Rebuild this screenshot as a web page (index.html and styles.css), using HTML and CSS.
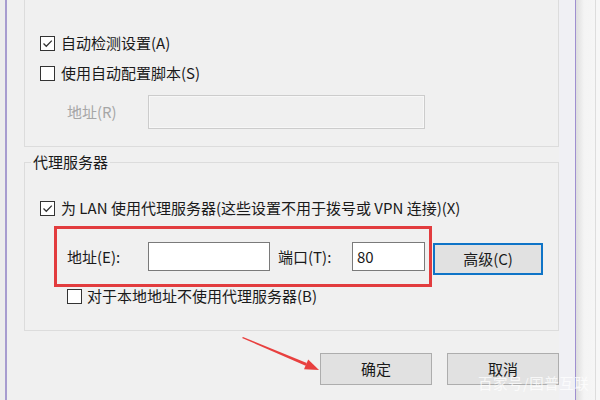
FILE: index.html
```html
<!DOCTYPE html>
<html lang="zh-CN">
  <head>
    <meta charset="UTF-8" />
    <meta name="viewport" content="width=device-width, initial-scale=1.0" />
    <title>局域网设置</title>
    <link rel="stylesheet" href="styles.css">
  </head>

  <body>
    <div class="screen">
      <div class="edge-left"></div>

      <div class="dialog">
        <!-- 自动配置 -->
        <div class="group group-top">
          <label class="check-row">
            <span class="check checked">
              <svg viewBox="0 0 13 13" width="13" height="13"><polyline points="2.5,6.5 5.3,9.3 10.8,3.6" /></svg>
            </span>
            自动检测设置(A)
          </label>
          <label class="check-row row-gap">
            <span class="check"></span>
            使用自动配置脚本(S)
          </label>
          <div class="field-row disabled">
            <span class="field-label">地址(R)</span>
            <span class="input input-wide"></span>
          </div>
        </div>

        <!-- 代理服务器 -->
        <fieldset class="group group-proxy">
          <legend>代理服务器</legend>
          <label class="check-row lan-row">
            <span class="check checked">
              <svg viewBox="0 0 13 13" width="13" height="13"><polyline points="2.5,6.5 5.3,9.3 10.8,3.6" /></svg>
            </span>
            为 LAN 使用代理服务器(这些设置不用于拨号或 VPN 连接)(X)
          </label>

          <div class="proxy-row">
            <div class="highlight">
              <span class="field-label">地址(E):</span>
              <span class="input input-addr"></span>
              <span class="port-label">端口(T):</span>
              <span class="input input-port">80</span>
            </div>
            <button class="btn btn-advanced">高级(C)</button>
          </div>

          <label class="check-row bypass-row">
            <span class="check"></span>
            对于本地地址不使用代理服务器(B)
          </label>
        </fieldset>

        <div class="actions">
          <button class="btn">确定</button>
          <button class="btn">取消</button>
        </div>
      </div>

      <div class="edge-right"></div>
    </div>

    <!-- annotation arrow + watermark -->
    <svg class="arrow" width="100" height="50" viewBox="0 0 100 50">
      <polygon points="12,11 75.8,37 74.6,39.8 11,12" fill="#e8403f" />
      <polygon points="77.2,33.6 88,44 73,43.2" fill="#e8403f" />
    </svg>
    <div class="watermark">百家号/国普互联</div>
  </body>
</html>
```

FILE: styles.css
```css
* {
  box-sizing: border-box;
}

body {
  margin: 0;
  width: 600px;
  height: 400px;
  overflow: hidden;
  position: relative;
  background: #f0f0f0;
  font-family: "Noto Sans CJK SC", "Microsoft YaHei", sans-serif;
  font-size: 15px;
  line-height: 22px;
  color: #1a1a1a;
}

.screen {
  display: flex;
  height: 400px;
}

.edge-left {
  width: 7px;
  background: #ececec;
  border-right: 2px solid #a79ccf;
}

.dialog {
  flex: 1;
  padding: 0 16px 0 17px;
  background: linear-gradient(to right, #f0f0f0 calc(100% - 16px), #f0f0f4 calc(100% - 16px));
}

.edge-right {
  width: 25px;
  border-left: 1px solid #9f8fd0;
  background: linear-gradient(to right, #dedede 0, #f4f4f4 8px, #f6f6f6 19px, #dddddd 19px, #dddddd 20px, #f7f7f7 20px);
}

/* group boxes */
.group {
  border: 1px solid #dcdcdc;
  margin: 0;
}

.group-top {
  border-top: none;
  height: 147px;
  padding: 32px 0 0 15px;
}

.group-proxy {
  margin-top: 4px;
  height: 180px;
  padding: 0 0 0 15px;
}

.group-proxy legend {
  margin-left: -9px;
  padding: 0 2px;
  line-height: 22px;
  color: #1a1a1a;
}

/* checkbox rows */
.check-row {
  display: flex;
  align-items: center;
  height: 22px;
  white-space: nowrap;
}

.row-gap {
  margin-top: 8px;
}

.check {
  width: 15px;
  height: 15px;
  border: 1px solid #333;
  background: #fff;
  margin-right: 6px;
  display: flex;
  align-items: center;
  justify-content: center;
}

.check svg polyline {
  fill: none;
  stroke: #333;
  stroke-width: 1.3;
}

.lan-row {
  margin-top: 24px;
}

.bypass-row {
  margin-top: -2px;
  margin-left: 27px;
}

.bypass-row .check {
  margin-right: 5px;
}

/* text fields */
.field-row {
  display: flex;
  align-items: center;
  margin-top: 11px;
  padding-left: 27px;
}

.field-label {
  width: 81px;
  flex-shrink: 0;
}

.disabled .field-label {
  color: #a6a6a6;
}

.input {
  display: block;
  flex-shrink: 0;
  height: 29px;
  background: #fff;
  border: 1px solid #7a7a7a;
  padding: 0 4px;
  line-height: 27px;
}

.input-wide {
  width: 277px;
  height: 34px;
  background: #f0f0f0;
  border-color: #cccccc;
  box-shadow: inset 0 0 0 1px #f7f7f7;
}

.input-addr {
  width: 122px;
}

.input-port {
  width: 73px;
}

.port-label {
  width: 74px;
  flex-shrink: 0;
  margin-left: 8px;
}

/* red highlight around proxy address */
.proxy-row {
  display: flex;
  align-items: flex-start;
  margin-top: 7px;
  margin-left: 14px;
}

.highlight {
  display: flex;
  align-items: center;
  width: 378px;
  height: 61px;
  border: 3px solid #e23c3e;
  padding: 0 5px 0 10px;
}

/* buttons */
.btn {
  font: inherit;
  line-height: 14px;
  color: #1a1a1a;
  width: 112px;
  height: 32px;
  background: #e1e1e1;
  border: 1px solid #adadad;
  padding: 0;
}

.btn-advanced {
  width: 110px;
  margin-top: 17px;
  margin-left: 1px;
  border: 2px solid #0f74c7;
}

.actions {
  display: flex;
  justify-content: flex-end;
  gap: 15px;
  margin-top: 22px;
}

/* overlays */
.arrow {
  position: absolute;
  left: 231px;
  top: 326px;
}

.watermark {
  position: absolute;
  left: 478px;
  top: 376px;
  font-size: 14.5px;
  line-height: 14px;
  color: rgba(255, 255, 255, 0.75);
  letter-spacing: 0.5px;
}
```
